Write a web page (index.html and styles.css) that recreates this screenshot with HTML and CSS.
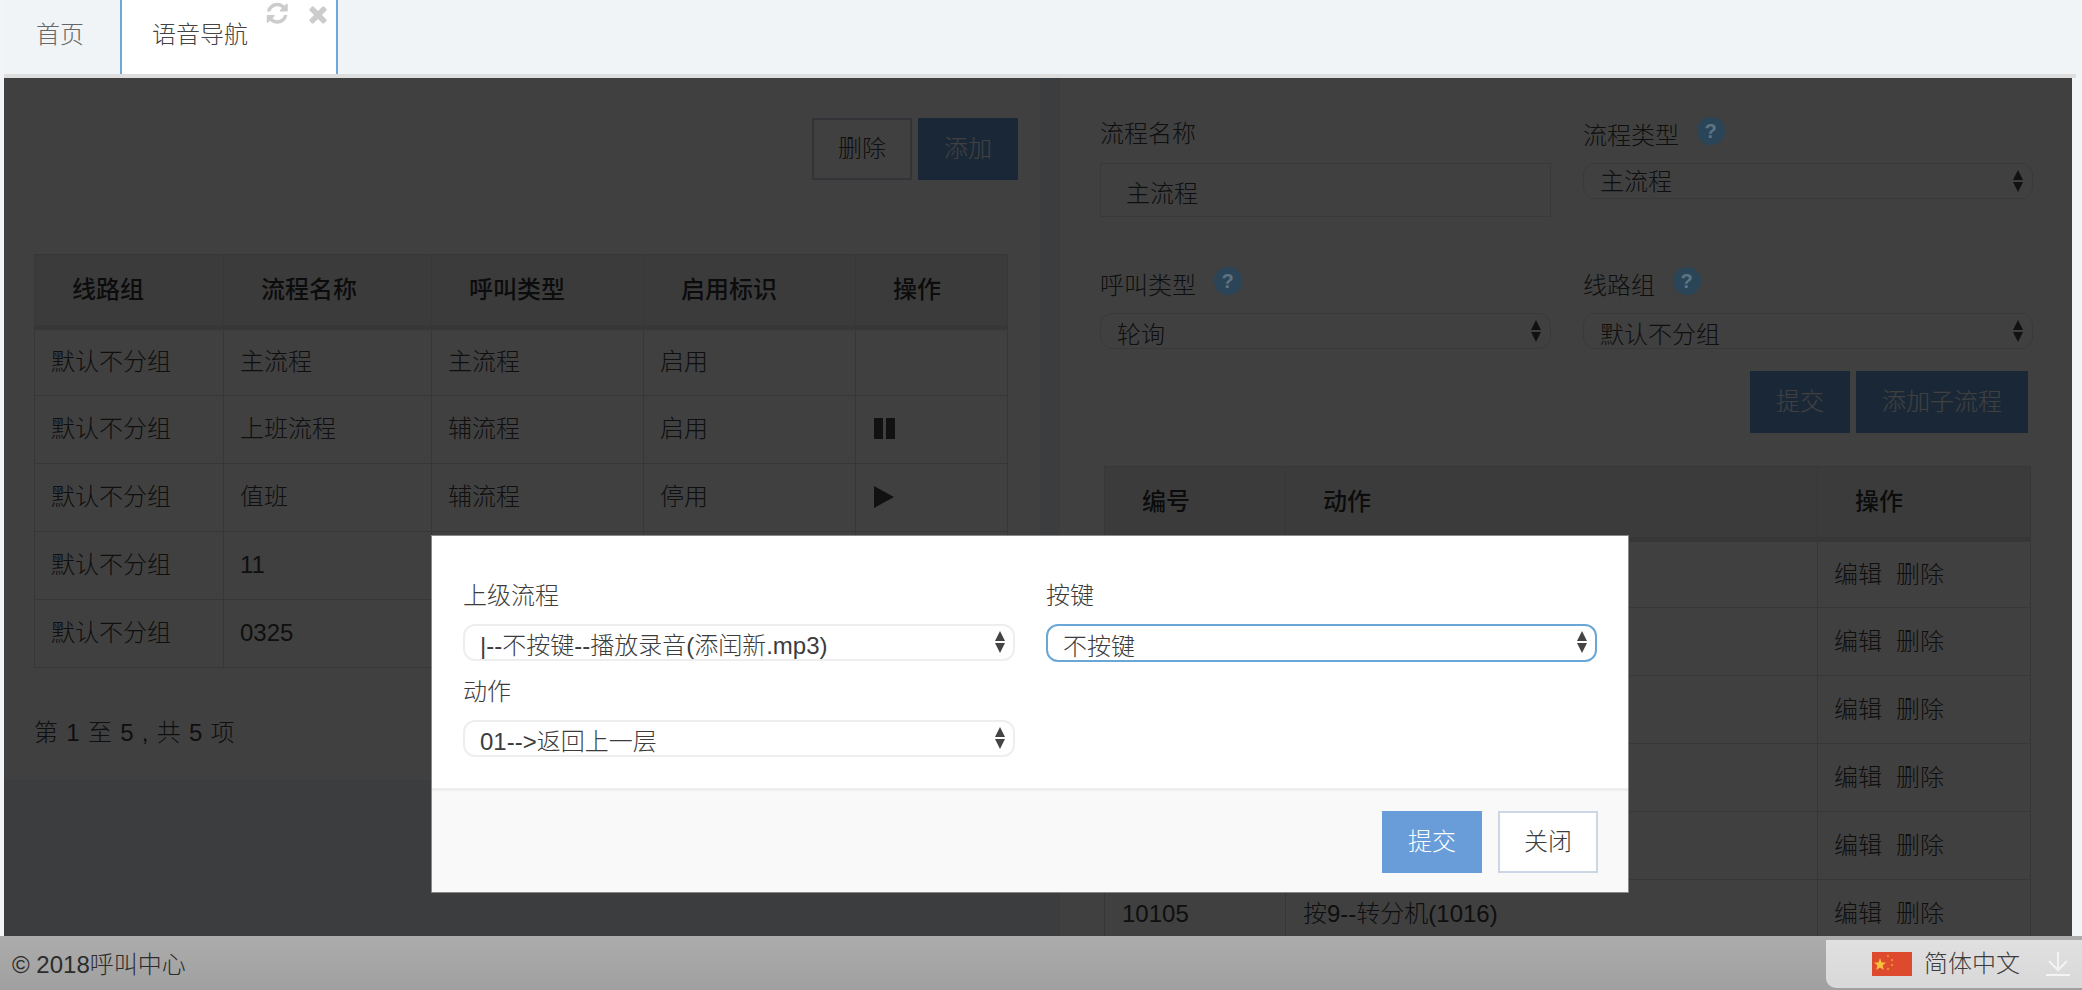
FILE: index.html
```html
<!DOCTYPE html>
<html lang="zh-CN">
<head>
<meta charset="utf-8">
<title>语音导航</title>
<link rel="stylesheet" href="styles.css">
</head>
<body>
<nav class="tabs">
  <a class="tab">首页</a>
  <a class="tab tab-active">语音导航
    <svg class="tab-icon icon-refresh" viewBox="0 0 1792 1792"><path d="M1639 1056q0 5-1 7-64 268-268 434.5t-478 166.5q-146 0-282.5-55t-243.5-157l-129 129q-19 19-45 19t-45-19-19-45v-448q0-26 19-45t45-19h448q26 0 45 19t19 45-19 45l-137 137q71 66 161 102t187 36q134 0 250-65t186-179q11-17 53-117 8-23 30-23h192q13 0 22.5 9.5t9.5 22.5zm25-800v448q0 26-19 45t-45 19h-448q-26 0-45-19t-19-45 19-45l138-138q-148-137-349-137-134 0-250 65t-186 179q-11 17-53 117-8 23-30 23h-199q-13 0-22.5-9.5t-9.5-22.5v-7q65-268 270-434.5t480-166.5q146 0 284 55.5t245 156.5l130-129q19-19 45-19t45 19 19 45z"/></svg>
    <svg class="tab-icon icon-close" viewBox="0 0 1792 1792"><path d="M1490 1322q0 40-28 68l-136 136q-28 28-68 28t-68-28l-294-294-294 294q-28 28-68 28t-68-28l-136-136q-28-28-28-68t28-68l294-294-294-294q-28-28-28-68t28-68l136-136q28-28 68-28t68 28l294 294 294-294q28-28 68-28t68 28l136 136q28 28 28 68t-28 68l-294 294 294 294q28 28 28 68z"/></svg>
  </a>
</nav>
<div class="rule"></div>

<main class="main">
  <section class="left">
    <div class="panel">
      <div class="actions">
        <button class="btn btn-default">删除</button>
        <button class="btn btn-primary">添加</button>
      </div>
      <table class="grid grid-flows">
        <colgroup><col class="c1"><col class="c2"><col class="c3"><col class="c4"><col class="c5"></colgroup>
        <thead>
          <tr><th>线路组</th><th>流程名称</th><th>呼叫类型</th><th>启用标识</th><th>操作</th></tr>
        </thead>
        <tbody>
          <tr><td>默认不分组</td><td>主流程</td><td>主流程</td><td>启用</td><td></td></tr>
          <tr><td>默认不分组</td><td>上班流程</td><td>辅流程</td><td>启用</td><td><span class="pause"></span></td></tr>
          <tr><td>默认不分组</td><td>值班</td><td>辅流程</td><td>停用</td><td><span class="play"></span></td></tr>
          <tr><td>默认不分组</td><td>11</td><td></td><td></td><td></td></tr>
          <tr><td>默认不分组</td><td>0325</td><td></td><td></td><td></td></tr>
        </tbody>
      </table>
      <p class="pager">第 1 至 5 , 共 5 项</p>
    </div>
  </section>

  <section class="right">
    <form class="form-grid">
      <div class="field">
        <label class="lbl">流程名称</label>
        <input class="input" value="主流程">
      </div>
      <div class="field">
        <label class="lbl">流程类型 <span class="help">?</span></label>
        <div class="sel"><select><option>主流程</option></select></div>
      </div>
      <div class="field">
        <label class="lbl">呼叫类型 <span class="help">?</span></label>
        <div class="sel"><select><option>轮询</option></select></div>
      </div>
      <div class="field">
        <label class="lbl">线路组 <span class="help">?</span></label>
        <div class="sel"><select><option>默认不分组</option></select></div>
      </div>
    </form>
    <div class="actions actions-form">
      <button class="btn btn-primary">提交</button>
      <button class="btn btn-primary btn-wide">添加子流程</button>
    </div>
    <table class="grid grid-steps">
      <colgroup><col class="s1"><col class="s2"><col class="s3"></colgroup>
      <thead>
        <tr><th>编号</th><th>动作</th><th>操作</th></tr>
      </thead>
      <tbody>
        <tr><td></td><td></td><td class="ops"><a>编辑</a><a>删除</a></td></tr>
        <tr><td></td><td></td><td class="ops"><a>编辑</a><a>删除</a></td></tr>
        <tr><td></td><td></td><td class="ops"><a>编辑</a><a>删除</a></td></tr>
        <tr><td></td><td></td><td class="ops"><a>编辑</a><a>删除</a></td></tr>
        <tr><td></td><td></td><td class="ops"><a>编辑</a><a>删除</a></td></tr>
        <tr><td>10105</td><td>按9--转分机(1016)</td><td class="ops"><a>编辑</a><a>删除</a></td></tr>
      </tbody>
    </table>
  </section>

  <div class="backdrop"></div>

  <div class="modal">
    <div class="modal-body">
      <div class="modal-col">
        <label class="lbl">上级流程</label>
        <div class="sel sel-modal"><select><option>|--不按键--播放录音(添闰新.mp3)</option></select></div>
      </div>
      <div class="modal-col">
        <label class="lbl">按键</label>
        <div class="sel sel-modal sel-focus"><select><option>不按键</option></select></div>
      </div>
      <div class="modal-col modal-col-second">
        <label class="lbl">动作</label>
        <div class="sel sel-modal"><select><option>01--&gt;返回上一层</option></select></div>
      </div>
    </div>
    <div class="modal-foot">
      <button class="btn btn-primary">提交</button>
      <button class="btn btn-default btn-close">关闭</button>
    </div>
  </div>
</main>

<footer class="footer">
  <span class="copy">© 2018呼叫中心</span>
  <div class="lang">
    <svg class="flag" viewBox="0 0 40 24">
      <rect width="40" height="24" fill="#de4a2e"/>
      <polygon points="8,6 9.6,10.4 14,10.6 10.6,13.4 11.8,18 8,15.4 4.2,18 5.4,13.4 2,10.6 6.4,10.4" fill="#f7c23c"/>
      <circle cx="16" cy="4" r="1.2" fill="#eb8a35"/>
      <circle cx="20" cy="8" r="1.2" fill="#eb8a35"/>
      <circle cx="20" cy="13" r="1.2" fill="#eb8a35"/>
      <circle cx="16" cy="17" r="1.2" fill="#eb8a35"/>
    </svg>
    <span class="lang-name">简体中文</span>
    <svg class="download" viewBox="0 0 24 24"><path d="M12 0v16M3 9l9 9 9-9M0 23h24" fill="none" stroke="#f4f4f4" stroke-width="2"/></svg>
  </div>
</footer>
</body>
</html>
```
FILE: styles.css
```css
* { box-sizing: border-box; }
html, body { margin: 0; padding: 0; }
body {
  width: 2082px;
  height: 990px;
  overflow: hidden;
  background: #f1f5f8;
  color: #3c3c3c;
  font: 300 24px/34px "Liberation Sans", "Noto Sans CJK SC", sans-serif;
}
.tabs {
  display: flex;
  height: 74px;
  background: #f0f4f7;
  margin-left: 4px;
}
.tab {
  display: block;
  height: 74px;
  padding: 18px 0 0 32px;
  width: 116px;
  color: #666;
}
.tab-active {
  position: relative;
  width: 218px;
  padding-left: 30px;
  background: #fff;
  color: #444;
  border-left: 2px solid #6fa8d8;
  border-right: 2px solid #6fa8d8;
}
.tab-icon { position: absolute; fill: #ccc; }
.icon-refresh { left: 143px; top: 1px; width: 24.5px; height: 24.5px; }
.icon-close { left: 183px; top: 1px; width: 26px; height: 26px; }
.rule { height: 4px; width: 2072px; margin-left: 4px; background: #ddd; }

.main {
  position: relative;
  display: flex;
  gap: 20px;
  width: 2068px;
  height: 858px;
  margin-left: 4px;
  background: #eef2f8;
  overflow: hidden;
}
.left { width: 1036px; }
.panel {
  height: 702px;
  padding: 40px 0 0 30px;
  background: #fff;
}
.right {
  flex: 1;
  padding: 39px 0 0 40px;
  background: #fff;
}

.actions { display: flex; justify-content: flex-end; gap: 6px; padding-right: 22px; }
.btn {
  display: block;
  width: 100px;
  height: 62px;
  padding: 0;
  border: 2px solid #ccd;
  background: #fff;
  color: #3c3c3c;
  font: inherit;
}
.btn-primary { border: 0; background: #689dd9; color: #fff; }
.btn-wide { width: 172px; }

.grid { border-collapse: collapse; table-layout: fixed; }
.grid th, .grid td { border: 1px solid #dadada; }
.grid th {
  padding: 0 0 0 37px;
  background: #e9ebf0;
  border-bottom: 5px solid #dadada;
  color: #333;
  font-weight: 500;
  text-align: left;
}
.grid td { padding: 0 0 2px 16px; vertical-align: middle; }

.grid-flows { margin-top: 74px; width: 973px; }
.grid-flows tr { height: 68px; }
.grid-flows thead tr { height: 73px; }
.c1 { width: 189px; }
.c2 { width: 208px; }
.c3 { width: 212px; }
.c4 { width: 212px; }
.c5 { width: 152px; }

.pause, .play { display: block; margin-left: 2px; }
.pause {
  width: 21px;
  height: 21px;
  background: linear-gradient(to right, #444 0 9px, transparent 9px 12px, #444 12px 21px);
}
.play {
  width: 0;
  height: 0;
  border-left: 20px solid #444;
  border-top: 11px solid transparent;
  border-bottom: 11px solid transparent;
}
.pager { margin: 48px 0 0; word-spacing: 1.6px; }

.form-grid {
  display: grid;
  grid-template-columns: 451px 450px;
  column-gap: 32px;
  row-gap: 37px;
}
.field { height: 113px; }
.lbl { display: block; height: 46px; white-space: nowrap; }
.help {
  position: relative;
  z-index: 2;
  display: inline-block;
  width: 28px;
  height: 28px;
  margin-left: 11px;
  border-radius: 50%;
  background: #2a4558;
  color: #5f7482;
  font: 700 20px/28px "Liberation Sans", sans-serif;
  text-align: center;
  vertical-align: 6px;
}
.input {
  display: block;
  width: 100%;
  height: 54px;
  padding: 2px 0 0 25px;
  border: 1px solid #e4e4e4;
  color: #3c3c3c;
  font: inherit;
  outline: 0;
}
.sel { position: relative; height: 36px; }
.sel select {
  display: block;
  width: 100%;
  height: 100%;
  padding: 8px 30px 0 16px;
  border: 1px solid #e4e4e4;
  border-radius: 12px;
  background: #fff;
  color: #3c3c3c;
  font: inherit;
  line-height: 26px;
  appearance: none;
  -webkit-appearance: none;
  outline: 0;
}
.field:nth-child(2) select { padding-top: 3px; padding-bottom: 1px; line-height: 28px; }
.sel::before, .sel::after {
  content: "";
  position: absolute;
  right: 10px;
  width: 0;
  height: 0;
  border-left: 5.5px solid transparent;
  border-right: 5.5px solid transparent;
  pointer-events: none;
}
.sel::before { top: 7px; border-bottom: 10px solid #444; }
.sel::after { top: 19px; border-top: 10px solid #444; }
.sel-modal { height: 37px; }
.sel-modal select { border-width: 2px; border-color: #eee; padding-top: 7px; padding-left: 15px; }
.sel-focus { height: 38px; }
.sel-focus select { border-color: #6aa7d6; }

.actions-form { margin-top: -9px; padding-right: 44px; }

.grid-steps { margin: 33px 0 0 4px; width: 926px; }
.grid-steps tr { height: 68px; }
.grid-steps thead tr { height: 73px; }
.grid-steps td { padding-bottom: 0; padding-left: 17px; }
.grid-steps td.ops { padding-left: 16px; }
.s1 { width: 181px; }
.s2 { width: 532px; }
.s3 { width: 213px; }
.grid-steps .ops a { margin-right: 14px; }

.backdrop {
  position: absolute;
  inset: 0;
  z-index: 1;
  background: rgba(0, 0, 0, 0.75);
}
.modal {
  position: absolute;
  z-index: 3;
  left: 427px;
  top: 457px;
  width: 1198px;
  height: 358px;
  display: flex;
  flex-direction: column;
  background: #fff;
  border: 1px solid #888;
}
.modal-body {
  flex: 1;
  display: grid;
  grid-template-columns: 552px 551px;
  grid-auto-rows: min-content;
  column-gap: 31px;
  align-content: start;
  padding: 43px 0 0 31px;
}
.modal-col .lbl { height: 45px; }
.modal-col { height: 96px; }
.modal-foot {
  display: flex;
  justify-content: flex-end;
  gap: 16px;
  height: 104px;
  padding: 20px 30px 0 0;
  background: #f9f9f9;
  border-top: 3px solid #eee;
}
.btn-close { border-color: #cdd6e4; }

.footer {
  position: relative;
  display: flex;
  justify-content: space-between;
  height: 54px;
  padding: 4px 0 0 12px;
  background: linear-gradient(#acacac, #a0a0a0);
  color: #2c2c2c;
}
.copy { line-height: 50px; }
.lang {
  display: flex;
  align-items: center;
  width: 256px;
  height: 48px;
  padding-left: 46px;
  border-radius: 0 0 0 10px;
  background: linear-gradient(#e0e0e0, #d8d8d8);
}
.flag { width: 40px; height: 24px; }
.lang-name { margin-left: 12px; color: #3c3c3c; }
.download { width: 24px; height: 24px; margin-left: 26px; }
```
